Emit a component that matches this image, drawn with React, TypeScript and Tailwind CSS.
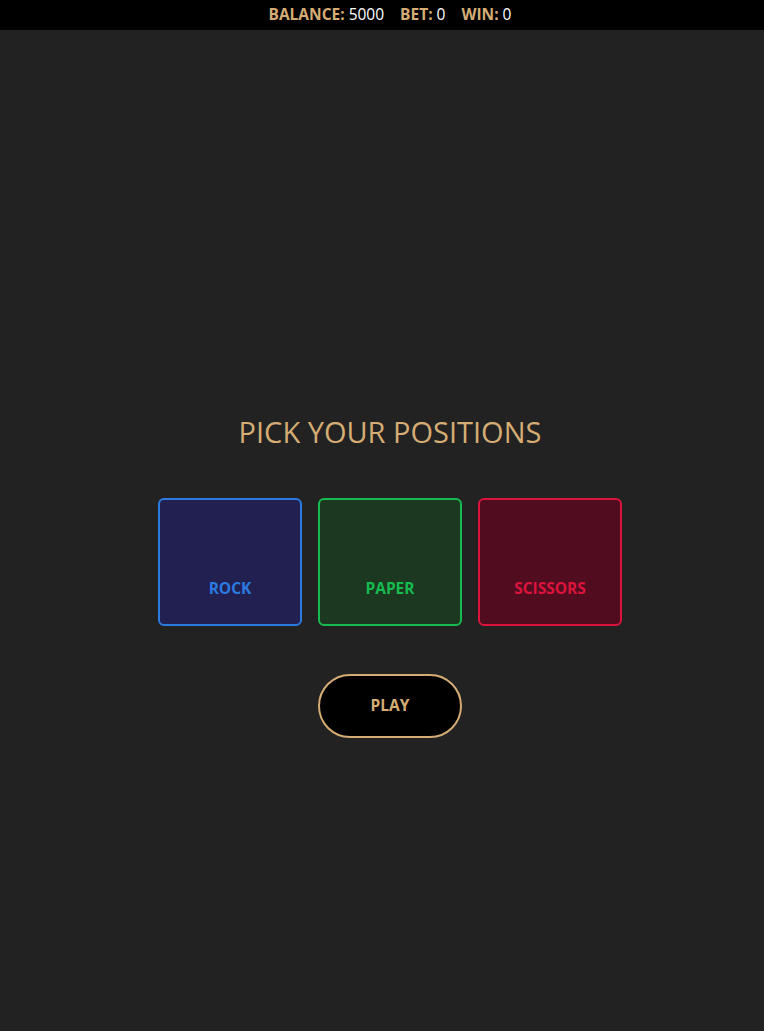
import { useState } from 'react';

type Choice = 'rock' | 'paper' | 'scissors';

const options: { id: Choice; label: string; box: string; text: string }[] = [
  { id: 'rock', label: 'ROCK', box: 'border-[#2b7be0] bg-[#212050]', text: 'text-[#2b7be0]' },
  { id: 'paper', label: 'PAPER', box: 'border-[#16bb50] bg-[#1c3820]', text: 'text-[#16bb50]' },
  { id: 'scissors', label: 'SCISSORS', box: 'border-[#dc143c] bg-[#520c20]', text: 'text-[#dc143c]' },
];

export default function App() {
  const [picked, setPicked] = useState<Choice[]>([]);

  const toggle = (id: Choice) => {
    setPicked(cur => (cur.includes(id) ? cur.filter(c => c !== id) : [...cur, id]));
  };

  return (
    <div className="min-h-screen bg-[#222222] font-['Open_Sans',sans-serif]">
      {/* Top bar */}
      <div className="h-[30px] bg-black flex items-center justify-center pl-4 text-[15.5px] leading-none">
        <span className="font-bold text-[#d5ad74]">BALANCE:</span>
        <span className="ml-1 text-white">5000</span>
        <span className="ml-4 font-bold text-[#d5ad74]">BET:</span>
        <span className="ml-1 text-white">0</span>
        <span className="ml-4 font-bold text-[#d5ad74]">WIN:</span>
        <span className="ml-1 text-white">0</span>
      </div>

      {/* Game */}
      <div className="flex flex-col items-center pl-4 pt-[383px]">
        <h1 className="text-[29px] leading-[38px] text-[#d5ad74]">PICK YOUR POSITIONS</h1>

        <div className="mt-[47px] flex gap-4">
          {options.map(o => (
            <button
              key={o.id}
              onClick={() => toggle(o.id)}
              className={`w-[144px] h-[128px] rounded-md border-2 flex flex-col items-center justify-end pb-[26px] ${o.box}`}
            >
              <span className={`text-[15.5px] font-bold leading-5 ${o.text}`}>{o.label}</span>
            </button>
          ))}
        </div>

        <button className="mt-12 w-[144px] h-[64px] rounded-full border-2 border-[#d5ad74] bg-black text-[15.5px] font-bold text-[#d5ad74]">
          PLAY
        </button>
      </div>
    </div>
  );
}
